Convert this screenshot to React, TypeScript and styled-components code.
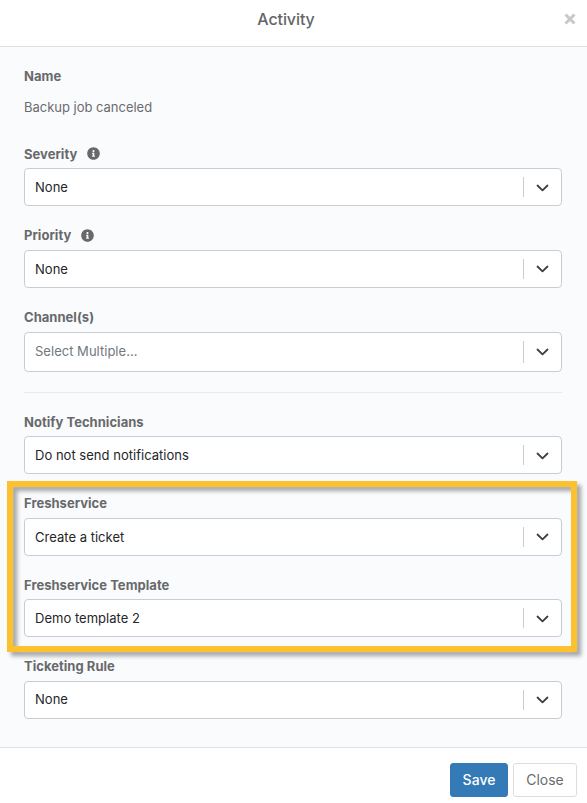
import React from "react";
import styled, { createGlobalStyle } from "styled-components";
import { FaInfoCircle } from "react-icons/fa";

const GlobalStyle = createGlobalStyle`
  *, *::before, *::after { box-sizing: border-box; }
  body { margin: 0; background: #fff; font-family: Inter, "Liberation Sans", sans-serif; }
`;

const Dialog = styled.div`
  display: flex;
  flex-direction: column;
  width: 587px;
  height: 803px;
  background: #fff;
  color: #646567;
  font-size: 13px;
  overflow: hidden;
`;

const Header = styled.header`
  display: grid;
  grid-template-columns: 40px 1fr 40px;
  align-items: center;
  height: 47px;
  padding: 0 0 8px;
  border-bottom: 1px solid #dfe0e1;
`;

const Title = styled.h1`
  grid-column: 2;
  margin: 0 0 0 -15px;
  text-align: center;
  font-size: 16px;
  font-weight: 500;
  line-height: 24px;
  letter-spacing: -0.08px;
`;

const CloseIcon = styled.button`
  display: flex;
  justify-content: center;
  padding: 0;
  margin-left: 5px;
  border: 0;
  background: none;
  color: #c8c8c8;
`;

const Body = styled.main`
  flex: 1;
  padding: 19px 25px 0 24px;
  background: #fafbfd;
`;

const Label = styled.div`
  display: flex;
  align-items: center;
  gap: 10px;
  height: 20px;
  font-weight: 700;
  line-height: 20px;
  letter-spacing: 0.03px;
  color: #68696b;
`;

const NameValue = styled.div`
  height: 20px;
  margin: 11px 0 26.8px;
  line-height: 20px;
  letter-spacing: -0.02px;
  color: #6b6c6e;
`;

const Field = styled.div`
  margin-bottom: 19px;
`;

const Control = styled.div<{ $multiple?: boolean }>`
  display: flex;
  align-items: center;
  width: 538px;
  height: ${(p) => (p.$multiple ? 40 : 38)}px;
  margin-top: 4.6px;
  padding-left: 10px;
  border: 1px solid #c8ccd3;
  border-radius: 4px;
  background: #fff;
  color: ${(p) => (p.$multiple ? "#6f7880" : "#242628")};
`;

const Value = styled.span<{ $raised?: boolean }>`
  flex: 1;
  line-height: 20px;
  letter-spacing: 0.02px;
  padding-bottom: ${(p) => (p.$raised ? 1.6 : 0)}px;
`;

const Separator = styled.span`
  align-self: stretch;
  width: 1px;
  margin: 8px 0;
  background: #cccccc;
`;

const Arrow = styled.span`
  display: flex;
  justify-content: center;
  width: 37px;
  padding-top: 1px;
  color: #3b3d40;
`;

const Divider = styled.hr`
  height: 1px;
  margin: 20px 0 19px;
  border: 0;
  background: #e9eaec;
`;

const Highlighted = styled.section`
  position: relative;
`;

const HighlightFrame = styled.div`
  position: absolute;
  top: -12.2px;
  left: -17px;
  width: 570px;
  height: 171px;
  border: 6px solid #fdc02f;
  filter: drop-shadow(4px 4px 2px rgba(0, 0, 0, 0.35));
  pointer-events: none;
`;

const Footer = styled.footer`
  display: flex;
  justify-content: flex-end;
  gap: 5px;
  height: 56px;
  padding: 15px 10px 0 0;
  border-top: 1px solid #dfe0e1;
`;

const Button = styled.button<{ $primary?: boolean }>`
  width: ${(p) => (p.$primary ? 58 : 64)}px;
  height: 34px;
  padding: 0 0 2px;
  border: 1px solid ${(p) => (p.$primary ? "#337ab7" : "#dddddd")};
  border-radius: 3px;
  background: ${(p) => (p.$primary ? "#337ab7" : "#fff")};
  color: ${(p) => (p.$primary ? "#fff" : "#6b6c6e")};
  font-family: inherit;
  font-size: 14px;
  font-weight: ${(p) => (p.$primary ? 500 : 400)};
`;

interface SelectFieldProps {
  label: string;
  value: string;
  info?: boolean;
  multiple?: boolean;
  raised?: boolean;
}

function SelectField({ label, value, info, multiple, raised }: SelectFieldProps) {
  return (
    <Field>
      <Label>
        {label}
        {info && <FaInfoCircle size={13} />}
      </Label>
      <Control $multiple={multiple}>
        <Value $raised={raised}>{value}</Value>
        <Separator />
        <Arrow>
          <svg width="13" height="8" viewBox="0 0 13 8" fill="none" stroke="currentColor" strokeWidth="1.8" strokeLinecap="round" strokeLinejoin="round">
            <path d="M1.5 1.5 6.5 6.3 11.5 1.5" />
          </svg>
        </Arrow>
      </Control>
    </Field>
  );
}

export default function App() {
  return (
    <>
      <GlobalStyle />
      <Dialog>
        <Header>
          <Title>Activity</Title>
          <CloseIcon aria-label="Dismiss">
            <svg width="12" height="12" viewBox="0 0 12 12" stroke="currentColor" strokeWidth="3">
              <path d="M1.5 1.5 10.5 10.5M10.5 1.5 1.5 10.5" />
            </svg>
          </CloseIcon>
        </Header>
        <Body>
          <Label>Name</Label>
          <NameValue>Backup job canceled</NameValue>
          <SelectField label="Severity" value="None" info />
          <SelectField label="Priority" value="None" info />
          <SelectField label="Channel(s)" value="Select Multiple..." multiple raised />
          <Divider />
          <SelectField label="Notify Technicians" value="Do not send notifications" />
          <Highlighted>
            <SelectField label="Freshservice" value="Create a ticket" />
            <SelectField label="Freshservice Template" value="Demo template 2" />
            <HighlightFrame />
          </Highlighted>
          <SelectField label="Ticketing Rule" value="None" raised />
        </Body>
        <Footer>
          <Button $primary>Save</Button>
          <Button>Close</Button>
        </Footer>
      </Dialog>
    </>
  );
}
